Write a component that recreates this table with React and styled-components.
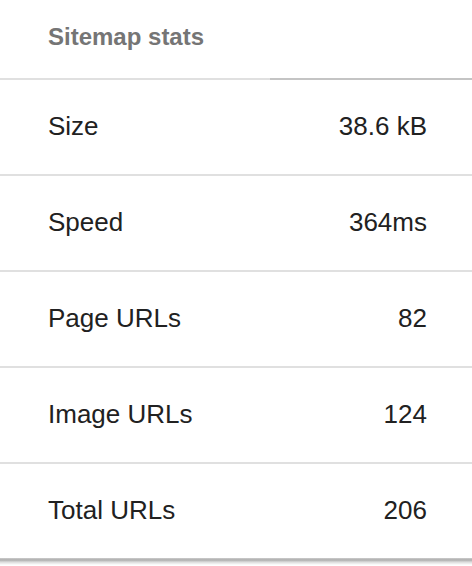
import React from "react";
import styled, { createGlobalStyle } from "styled-components";

const stats = [
  { label: "Size", value: "38.6 kB" },
  { label: "Speed", value: "364ms" },
  { label: "Page URLs", value: "82" },
  { label: "Image URLs", value: "124" },
  { label: "Total URLs", value: "206" },
];

const App = () => {
  return (
    <Page>
      <GlobalStyle />
      <Card>
        <Table>
          <thead>
            <tr>
              <HeadCell>Sitemap stats</HeadCell>
              <HeadCell sorted />
            </tr>
          </thead>
          <tbody>
            {stats.map((item) => (
              <Row key={item.label}>
                <Cell>{item.label}</Cell>
                <Cell numeric>{item.value}</Cell>
              </Row>
            ))}
          </tbody>
        </Table>
      </Card>
      <Shadow />
    </Page>
  );
};

export default App;

const GlobalStyle = createGlobalStyle`
  html,
  body {
    margin: 0;
    background: #fff;
    font-family: "Liberation Sans", Arial, sans-serif;
  }
`;

const Page = styled.div`
  display: flex;
  flex-direction: column;
  min-height: 566px;
`;

const Card = styled.div`
  width: 100%;
  background: #fff;
`;

// card edge shadow, kept in flow so it is part of the page
const Shadow = styled.div`
  height: 7px;
  background: linear-gradient(
    to bottom,
    rgba(0, 0, 0, 0.2) 0px,
    rgba(0, 0, 0, 0.32) 2px,
    rgba(0, 0, 0, 0.14) 4px,
    rgba(0, 0, 0, 0) 7px
  );
`;

const Table = styled.table`
  width: 100%;
  border-collapse: collapse;
  border-spacing: 0;
`;

const HeadCell = styled.th`
  height: 74px;
  padding: 0 48px 4px;
  width: ${(props) => (props.sorted ? "auto" : "174px")};
  text-align: left;
  font-size: 24px;
  font-weight: bold;
  color: #757575;
  border-bottom: 2px solid ${(props) => (props.sorted ? "#c4c4c4" : "#e0e0e0")};
  vertical-align: middle;
`;

const Row = styled.tr`
  border-bottom: 2px solid #e0e0e0;
  &:last-child {
    border-bottom: none;
  }
`;

const Cell = styled.td`
  height: 92px;
  padding: 0 45px 2px 48px;
  font-size: 26px;
  color: #212121;
  text-align: ${(props) => (props.numeric ? "right" : "left")};
  vertical-align: middle;
`;
